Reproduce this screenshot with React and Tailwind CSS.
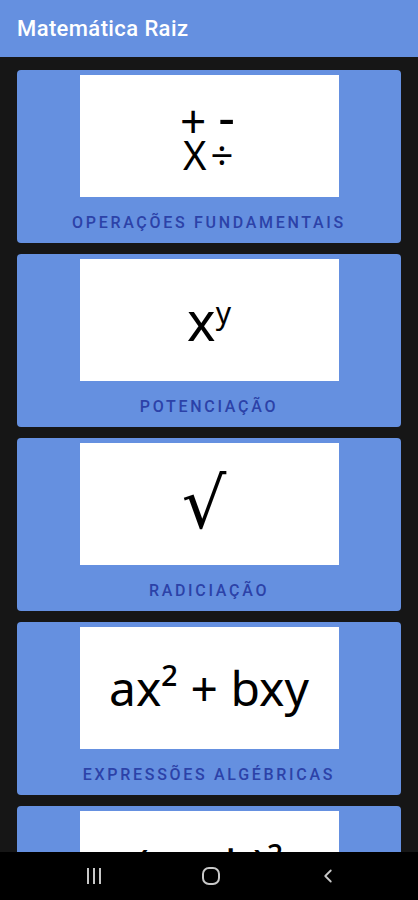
import { ChevronLeft } from 'lucide-react';

const cards = [
  {
    label: 'Operações Fundamentais',
    art: (
      <div className="flex flex-col items-start font-['Noto_Sans',sans-serif] text-black ml-[-3px]">
        <div className="leading-[37px] h-[37px] whitespace-nowrap overflow-visible">
          <span className="text-[46px]">+</span>
          <span className="text-[52px] ml-[12px] relative -top-[2px]">-</span>
        </div>
        <div className="leading-[37px] h-[37px] whitespace-nowrap ml-[3px]">
          <span className="text-[40px]">X</span>
          <span className="text-[40px] ml-[4px]">÷</span>
        </div>
      </div>
    ),
  },
  {
    label: 'Potenciação',
    art: (
      <div className="flex items-start font-['Noto_Sans',sans-serif] text-black">
        <span className="text-[54px] leading-none">x</span>
        <span className="text-[30px] leading-none mt-[5px]">y</span>
      </div>
    ),
  },
  {
    label: 'Radiciação',
    art: (
      <span className="text-[70px] font-['DejaVu_Serif',serif] text-black leading-none mr-[10px]">√</span>
    ),
  },
  {
    label: 'Expressões Algébricas',
    art: (
      <span className="text-[48px] font-['Noto_Sans',sans-serif] text-black leading-none whitespace-nowrap">
        ax² + bxy
      </span>
    ),
  },
  {
    label: 'Produtos Notáveis',
    top: true,
    art: (
      <span className="text-[46px] font-['Noto_Sans',sans-serif] text-black leading-none whitespace-nowrap">
        (a + b)²
      </span>
    ),
  },
];

function Card({ label, art, top }) {
  return (
    <div className="shrink-0 bg-[#6590e0] rounded-[4px] h-[173px] flex flex-col items-center pt-[5px]">
      <div
        className={
          top
            ? 'w-[259px] h-[122px] bg-white flex items-start justify-center overflow-hidden pt-[31px]'
            : 'w-[259px] h-[122px] bg-white flex items-center justify-center overflow-hidden'
        }
      >
        {art}
      </div>
      <div className="flex-1 flex items-center pt-[6px]">
        <span className="uppercase text-[16px] font-medium tracking-[2.7px] text-[#2c42a8] font-['Roboto',sans-serif]">
          {label}
        </span>
      </div>
    </div>
  );
}

export default function App() {
  return (
    <div className="w-[418px] h-[900px] flex flex-col bg-[#161616] font-['Roboto',sans-serif]">
      <div className="h-[57px] shrink-0 bg-[#6590e0] flex items-center px-[17px]">
        <h1 className="text-white text-[22px] font-medium tracking-[0.4px]">Matemática Raiz</h1>
      </div>
      <div className="flex-1 overflow-hidden flex flex-col gap-[11px] px-[17px] pt-[13px]">
        {cards.map((c) => (
          <Card key={c.label} {...c} />
        ))}
      </div>
      <div className="h-[48px] shrink-0 bg-black flex items-center justify-center pl-[4px] text-[#c8c8c8]">
        <div className="w-[117px] flex justify-center">
          <svg width="18" height="18" viewBox="0 0 18 18" fill="none" stroke="currentColor" strokeWidth="2">
            <path d="M3 1v16M9 1v16M15 1v16" />
          </svg>
        </div>
        <div className="w-[117px] flex justify-center">
          <svg width="20" height="20" viewBox="0 0 20 20" fill="none" stroke="currentColor" strokeWidth="2">
            <rect x="2" y="2" width="16" height="16" rx="6" />
          </svg>
        </div>
        <div className="w-[117px] flex justify-center">
          <ChevronLeft size={22} strokeWidth={2} />
        </div>
      </div>
    </div>
  );
}
